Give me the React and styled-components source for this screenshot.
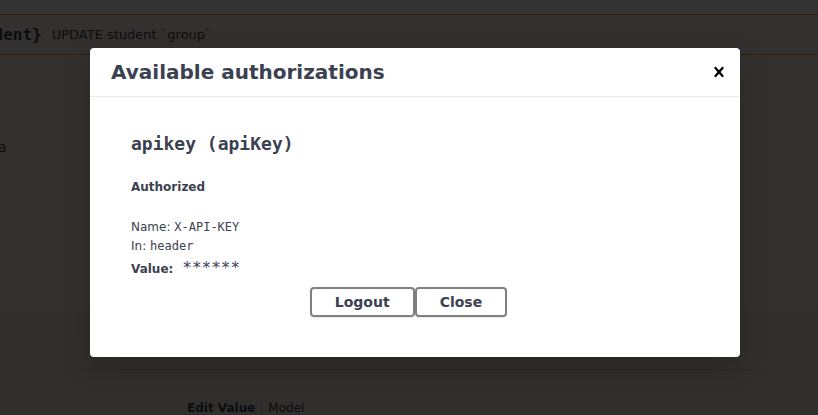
import React from "react";
import styled, { createGlobalStyle } from "styled-components";

const GlobalStyle = createGlobalStyle`
  html, body {
    margin: 0;
    padding: 0;
  }
  body {
    font-family: "DejaVu Sans", sans-serif;
    color: #3b4151;
    background: #fff;
  }
`;

const Page = styled.div`
  position: relative;
  width: 818px;
  height: 415px;
  overflow: hidden;
  display: flex;
  flex-direction: column;
`;

const TopStrip = styled.div`
  height: 14px;
  flex: none;
`;

const Opblock = styled.div`
  flex: 1;
  display: flex;
  flex-direction: column;
  background: #fff6ea;
  border-top: 1px solid #fca130;
`;

const Summary = styled.div`
  height: 39px;
  flex: none;
  display: flex;
  align-items: center;
  gap: 10px;
  border-bottom: 1px solid #fca130;
`;

const Path = styled.span`
  font-family: "DejaVu Sans Mono", monospace;
  font-size: 16px;
  font-weight: 700;
  margin-left: -45px;
`;

const SummaryText = styled.span`
  font-size: 13px;
`;

const Body = styled.div`
  height: 255px;
  flex: none;
  padding-top: 84px;
  box-sizing: border-box;
`;

const Description = styled.p`
  margin: 0 0 0 -2px;
  font-size: 14px;
`;

const SectionHeader = styled.div`
  height: 59px;
  flex: none;
  background: #f2ebe3;
  border-bottom: 1px solid #d9d3cc;
`;

const Lower = styled.div`
  flex: 1;
  background: #eee8e0;
  padding: 31px 0 0 187px;
`;

const Tabs = styled.ul`
  margin: 0;
  padding: 0;
  list-style: none;
  display: flex;
  font-size: 12px;
`;

const Tab = styled.li`
  font-weight: ${(p) => (p.$active ? 700 : 400)};
  padding: 0 6px 0 0;
  & + & {
    border-left: 1px solid #bbb;
    padding-left: 6px;
  }
`;

const Backdrop = styled.div`
  position: absolute;
  inset: 0;
  background: rgba(0, 0, 0, 0.8);
`;

const Modal = styled.div`
  position: absolute;
  left: 90px;
  top: 48px;
  width: 650px;
  background: #fff;
  border-radius: 4px;
  box-shadow: 0 10px 30px 0 rgba(0, 0, 0, 0.2);
`;

const Header = styled.div`
  display: flex;
  align-items: center;
  justify-content: space-between;
  height: 48px;
  padding: 0 11px 0 21px;
  border-bottom: 1px solid #ebebeb;
`;

const Title = styled.h3`
  margin: 0;
  font-size: 20px;
  font-weight: 700;
  color: #3b4151;
`;

const CloseIcon = styled.button`
  border: none;
  background: none;
  padding: 0;
  width: 20px;
  height: 20px;
  display: flex;
  cursor: pointer;
`;

const Content = styled.div`
  padding: 20px;
`;

const AuthContainer = styled.div`
  padding: 10px 20px 10px 21px;
`;

const SchemeTitle = styled.h4`
  margin: 6px 0 0;
  font-family: "DejaVu Sans Mono", monospace;
  font-size: 18px;
  line-height: 21px;
  font-weight: 700;
`;

const Status = styled.h6`
  margin: 26px 0 0;
  font-size: 12px;
  line-height: 14px;
  font-weight: 700;
`;

const Info = styled.p`
  margin: ${(p) => (p.$first ? "24px" : "0")} 0 0;
  font-size: 12px;
  line-height: 19px;
`;

const Code = styled.code`
  font-family: "DejaVu Sans Mono", monospace;
  font-size: ${(p) => p.$size || 12}px;
`;

const ValueRow = styled.div`
  font-size: 12px;
  line-height: 24px;
`;

const Label = styled.label`
  font-weight: 700;
  margin-right: 9px;
`;

const ButtonRow = styled.div`
  display: flex;
  justify-content: center;
  padding: 6px 0 10px;
`;

const Button = styled.button`
  font-family: "DejaVu Sans", sans-serif;
  font-size: 14px;
  font-weight: 700;
  line-height: 16px;
  color: #3b4151;
  background: transparent;
  border: 2px solid gray;
  border-radius: 4px;
  padding: 5px 23px;
  margin-right: ${(p) => (p.$done ? "14px" : "0")};
  box-shadow: 0 1px 2px rgba(0, 0, 0, 0.1);
  cursor: pointer;
`;

export default function App() {
  return (
    <>
      <GlobalStyle />
      <Page>
        <TopStrip />
        <Opblock>
          <Summary>
            <Path>{"{student}"}</Path>
            <SummaryText>UPDATE student `group`</SummaryText>
          </Summary>
          <Body>
            <Description>a</Description>
          </Body>
          <SectionHeader />
          <Lower>
            <Tabs>
              <Tab $active>Edit Value</Tab>
              <Tab>Model</Tab>
            </Tabs>
          </Lower>
        </Opblock>
        <Backdrop />
        <Modal>
          <Header>
            <Title>Available authorizations</Title>
            <CloseIcon aria-label="Close">
              <svg width="20" height="20" viewBox="0 0 20 20">
                <path
                  fill="#000"
                  d="M14.348 14.849c-.469.469-1.229.469-1.697 0L10 11.819l-2.651 3.029c-.469.469-1.229.469-1.697 0-.469-.469-.469-1.229 0-1.697l2.758-3.15-2.759-3.152c-.469-.469-.469-1.228 0-1.697.469-.469 1.228-.469 1.697 0L10 8.183l2.651-3.031c.469-.469 1.228-.469 1.697 0 .469.469.469 1.229 0 1.697l-2.758 3.152 2.758 3.150c.469.469.469 1.229 0 1.698z"
                />
              </svg>
            </CloseIcon>
          </Header>
          <Content>
            <AuthContainer>
              <SchemeTitle>apikey (apiKey)</SchemeTitle>
              <Status>Authorized</Status>
              <Info $first>
                Name: <Code>X-API-KEY</Code>
              </Info>
              <Info>
                In: <Code>header</Code>
              </Info>
              <ValueRow>
                <Label>Value:</Label>
                <Code $size={16}>******</Code>
              </ValueRow>
              <ButtonRow>
                <Button>Logout</Button>
                <Button $done>Close</Button>
              </ButtonRow>
            </AuthContainer>
          </Content>
        </Modal>
      </Page>
    </>
  );
}
